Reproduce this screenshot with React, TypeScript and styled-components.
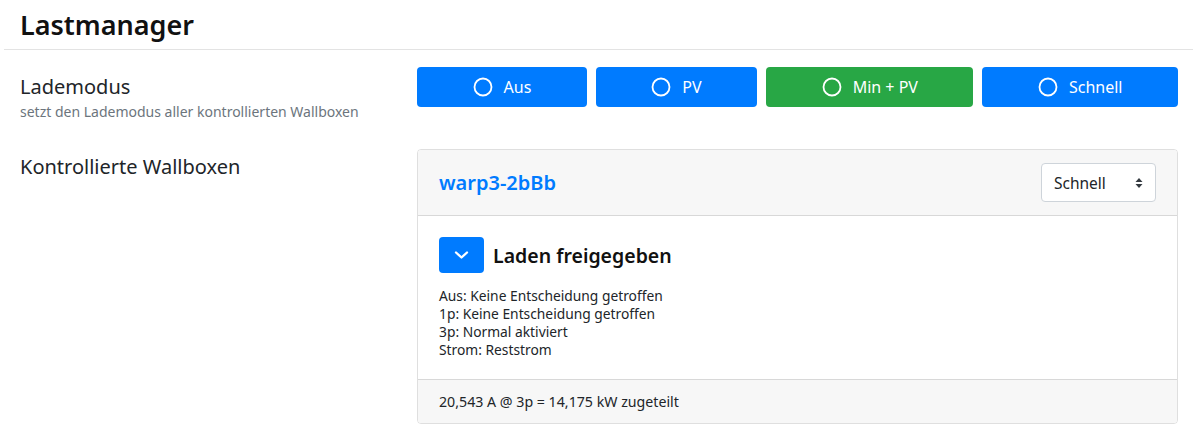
import React from "react";
import styled, { createGlobalStyle } from "styled-components";

const Global = createGlobalStyle`
  html, body { margin: 0; padding: 0; background: #fff; }
  body {
    font-family: "Noto Sans", "Open Sans", sans-serif;
    color: #212529;
  }
  * { box-sizing: border-box; }
`;

const Page = styled.div`
  padding: 0 7px 0 4px;
`;

const Header = styled.div`
  border-bottom: 1px solid #e3e3e3;
  padding: 6px 0 6px 16px;
  height: 50px;
`;

const Title = styled.h1`
  margin: 0;
  font-size: 27px;
  font-weight: 600;
  line-height: 38px;
  color: #111;
`;

const FormRow = styled.div<{ $top: number }>`
  display: grid;
  grid-template-columns: 397px 1fr;
  align-items: start;
  padding: ${(p) => p.$top}px 15px 0 16px;
`;

const LabelCol = styled.div<{ $offset: number }>`
  display: flex;
  flex-direction: column;
  padding-top: ${(p) => p.$offset}px;
`;

const Label = styled.div`
  font-size: 20px;
  line-height: 26px;
  color: #212529;
`;

const Help = styled.div`
  margin-top: 3px;
  font-size: 14px;
  color: #6c757d;
  line-height: 18px;
`;

const BtnGroup = styled.div`
  display: flex;
  gap: 9px;
  height: 40px;
`;

const ModeBtn = styled.button<{ $active?: boolean }>`
  flex: 1 1 auto;
  display: flex;
  align-items: center;
  justify-content: center;
  gap: 11px;
  border: none;
  border-radius: 4px;
  background: ${(p) => (p.$active ? "#28a745" : "#007bff")};
  color: #fff;
  font-family: inherit;
  font-size: 16px;
  padding: 0 12px;
  cursor: pointer;
`;

const Card = styled.div`
  border: 1px solid rgba(0, 0, 0, 0.125);
  border-radius: 4px;
  overflow: hidden;
`;

const CardHeader = styled.div`
  display: flex;
  align-items: center;
  justify-content: space-between;
  background: #f7f7f7;
  border-bottom: 1px solid rgba(0, 0, 0, 0.125);
  height: 66px;
  padding: 0 21px 0 21px;
`;

const DeviceLink = styled.a`
  color: #007bff;
  font-size: 20px;
  font-weight: 600;
  text-decoration: none;
`;

const SelectBox = styled.div`
  display: flex;
  align-items: center;
  justify-content: space-between;
  width: 115px;
  height: 39px;
  border: 1px solid #ced4da;
  border-radius: 4px;
  background: #fff;
  padding: 0 12px 0 12px;
  font-size: 15.5px;
  color: #212529;
`;

const CardBody = styled.div`
  padding: 21px 21px 20px 21px;
`;

const StatusRow = styled.div`
  display: flex;
  align-items: center;
  gap: 9px;
  margin-bottom: 14px;
`;

const ToggleBtn = styled.button`
  width: 45px;
  height: 36px;
  border: none;
  border-radius: 4px;
  background: #007bff;
  display: flex;
  align-items: center;
  justify-content: center;
  padding: 0;
`;

const StatusTitle = styled.div`
  font-size: 19.5px;
  font-weight: 600;
  color: #111;
`;

const Detail = styled.div`
  font-size: 13.8px;
  line-height: 18px;
  color: #212529;
`;

const CardFooter = styled.div`
  background: #f7f7f7;
  border-top: 1px solid rgba(0, 0, 0, 0.125);
  height: 44px;
  display: flex;
  align-items: center;
  padding: 0 21px;
  font-size: 14.2px;
  color: #212529;
`;

const Circle = () => (
  <svg width="20" height="20" viewBox="0 0 20 20">
    <circle cx="10" cy="10" r="8.5" fill="none" stroke="#fff" strokeWidth="1.8" />
  </svg>
);

const Chevron = () => (
  <svg width="15" height="10" viewBox="0 0 15 10">
    <polyline points="2,2.5 7.5,7.5 13,2.5" fill="none" stroke="#fff" strokeWidth="2.3" strokeLinecap="round" strokeLinejoin="round" />
  </svg>
);

const UpDown = () => (
  <svg width="8" height="12" viewBox="0 0 8 12">
    <polygon points="4,1 7.5,5 0.5,5" fill="#343a40" />
    <polygon points="4,11 7.5,7 0.5,7" fill="#343a40" />
  </svg>
);

const modes = ["Aus", "PV", "Min + PV", "Schnell"];

export default function App() {
  return (
    <Page>
      <Global />
      <Header>
        <Title>Lastmanager</Title>
      </Header>
      <FormRow $top={17}>
        <LabelCol $offset={7}>
          <Label>Lademodus</Label>
          <Help>setzt den Lademodus aller kontrollierten Wallboxen</Help>
        </LabelCol>
        <BtnGroup>
          {modes.map((m) => (
            <ModeBtn key={m} $active={m === "Min + PV"}>
              <Circle />
              <span>{m}</span>
            </ModeBtn>
          ))}
        </BtnGroup>
      </FormRow>
      <FormRow $top={28}>
        <LabelCol $offset={5}>
          <Label>Kontrollierte Wallboxen</Label>
        </LabelCol>
        <Card>
          <CardHeader>
            <DeviceLink href="#">warp3-2bBb</DeviceLink>
            <SelectBox>
              <span>Schnell</span>
              <UpDown />
            </SelectBox>
          </CardHeader>
          <CardBody>
            <StatusRow>
              <ToggleBtn>
                <Chevron />
              </ToggleBtn>
              <StatusTitle>Laden freigegeben</StatusTitle>
            </StatusRow>
            <Detail>Aus: Keine Entscheidung getroffen</Detail>
            <Detail>1p: Keine Entscheidung getroffen</Detail>
            <Detail>3p: Normal aktiviert</Detail>
            <Detail>Strom: Reststrom</Detail>
          </CardBody>
          <CardFooter>20,543 A @ 3p = 14,175 kW zugeteilt</CardFooter>
        </Card>
      </FormRow>
    </Page>
  );
}
